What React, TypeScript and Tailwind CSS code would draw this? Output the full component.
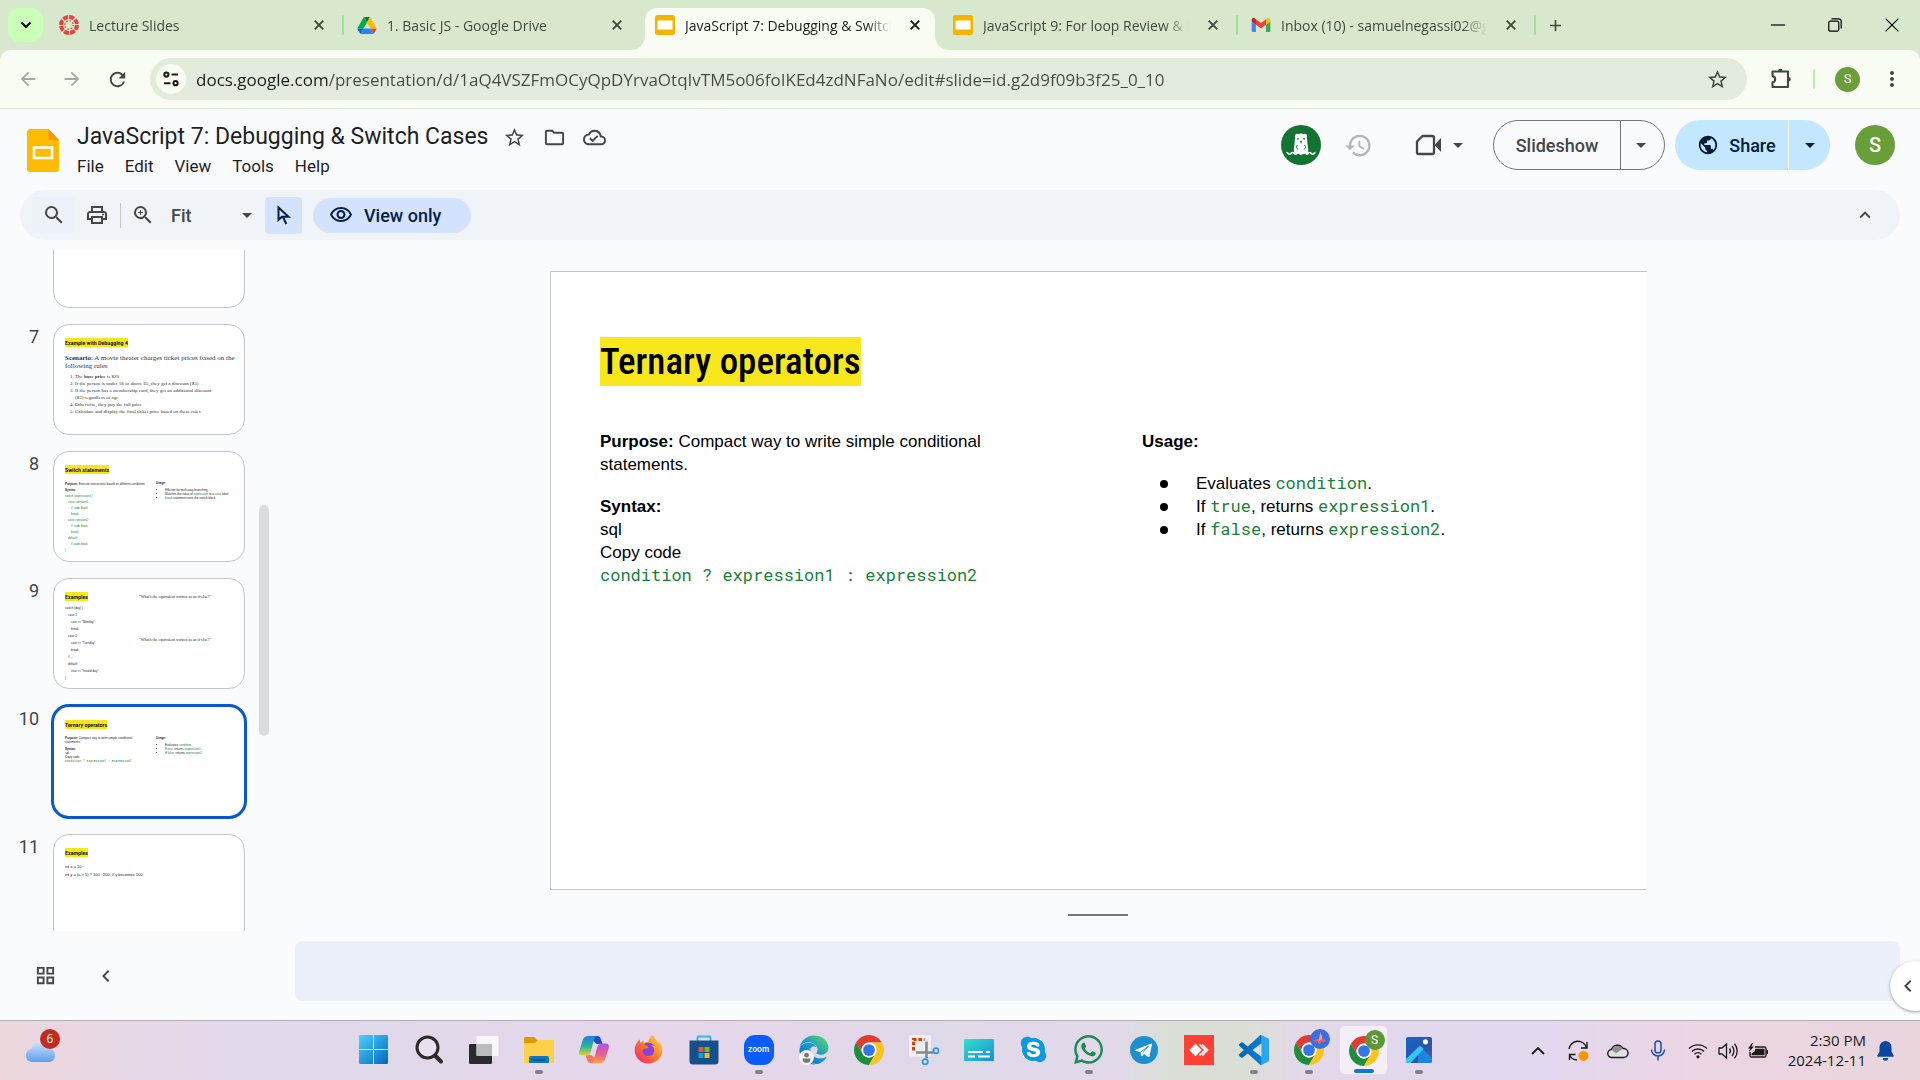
import React from "react";
import {
  MdAdd,
  MdArrowBack,
  MdArrowDropDown,
  MdArrowForward,
  MdChevronLeft,
  MdGridView,
  MdHistory,
  MdKeyboardArrowUp,
  MdMoreVert,
  MdOutlineCloudDone,
  MdOutlineFolder,
  MdOutlinePrint,
  MdOutlineVisibility,
  MdPublic,
  MdRefresh,
  MdSearch,
  MdStarOutline,
  MdZoomIn,
} from "react-icons/md";
import { FaEdge, FaFirefoxBrowser, FaSkype, FaWhatsapp } from "react-icons/fa";

/* ---------- brand marks ---------- */

function CanvasMark() {
  return (
    <svg viewBox="0 0 20 20" className="size-5" aria-hidden="true">
      <circle cx="10" cy="10" r="8" fill="none" stroke="#e8433a" strokeWidth="4" strokeDasharray="5 1.28" />
      <circle cx="10" cy="10" r="4.2" fill="none" stroke="#e8433a" strokeWidth="1.4" strokeDasharray="1.4 1.9" />
    </svg>
  );
}

function DriveMark() {
  return (
    <svg viewBox="0 0 87.3 78" className="h-[17px] w-5" aria-hidden="true">
      <path fill="#0066da" d="m6.6 66.85 3.85 6.65c.8 1.4 1.95 2.5 3.3 3.3l13.75-23.8h-27.5c0 1.55.4 3.1 1.2 4.5z" />
      <path fill="#00ac47" d="m43.65 25-13.75-23.8c-1.35.8-2.5 1.9-3.3 3.3l-25.4 44a9.06 9.06 0 0 0 -1.2 4.5h27.5z" />
      <path fill="#ea4335" d="m73.55 76.8c1.35-.8 2.5-1.9 3.3-3.3l1.6-2.75 7.65-13.25c.8-1.4 1.2-2.95 1.2-4.5h-27.502l5.852 11.5z" />
      <path fill="#00832d" d="m43.65 25 13.75-23.8c-1.35-.8-2.9-1.2-4.5-1.2h-18.5c-1.6 0-3.15.45-4.5 1.2z" />
      <path fill="#2684fc" d="m59.8 53h-32.3l-13.75 23.8c1.35.8 2.9 1.2 4.5 1.2h50.8c1.6 0 3.15-.45 4.5-1.2z" />
      <path fill="#ffba00" d="m73.4 26.5-12.7-22c-.8-1.4-1.95-2.5-3.3-3.3l-13.75 23.8 16.15 28h27.45c0-1.55-.4-3.1-1.2-4.5z" />
    </svg>
  );
}

function SlidesMark() {
  return (
    <svg viewBox="0 0 20 20" className="size-5" aria-hidden="true">
      <rect width="20" height="20" rx="2.5" fill="#f5b400" />
      <rect x="2.5" y="5.5" width="15" height="9" fill="#fff" />
    </svg>
  );
}

function GmailMark() {
  return (
    <svg viewBox="52 42 88 66" className="h-[14px] w-5" aria-hidden="true">
      <path fill="#4285f4" d="M58 108h14V74L52 59v43c0 3.32 2.69 6 6 6" />
      <path fill="#34a853" d="M120 108h14c3.32 0 6-2.69 6-6V59l-20 15" />
      <path fill="#fbbc04" d="M120 48v26l20-15v-8c0-7.42-8.47-11.65-14.4-7.2" />
      <path fill="#ea4335" d="M72 74V48l24 18 24-18v26L96 92" />
      <path fill="#c5221f" d="M52 51v8l20 15V48l-5.6-4.2c-5.94-4.45-14.4-.22-14.4 7.2" />
    </svg>
  );
}

function ChromeMark() {
  return (
    <svg viewBox="0 0 48 48" className="size-[30px]" aria-hidden="true">
      <path fill="#e33b2e" d="M24 12H44.78A24 24 0 0 0 3.22 12L13.61 30A12 12 0 0 1 24 12Z" />
      <path fill="#1e8e3e" d="M13.61 30L3.22 12A24 24 0 0 0 24 48L34.39 30A12 12 0 0 1 13.61 30Z" />
      <path fill="#fcc419" d="M34.39 30L24 48A24 24 0 0 0 44.78 12H24A12 12 0 0 1 34.39 30Z" />
      <circle cx="24" cy="24" r="12" fill="#fff" />
      <circle cx="24" cy="24" r="9.4" fill="#3376e8" />
    </svg>
  );
}

/* ---------- browser chrome ---------- */

const tabs = [
  { title: "Lecture Slides", icon: <CanvasMark />, active: false, divider: true },
  { title: "1. Basic JS - Google Drive", icon: <DriveMark />, active: false, divider: false },
  { title: "JavaScript 7: Debugging & Switch Cases", icon: <SlidesMark />, active: true, divider: false },
  { title: "JavaScript 9: For loop Review & Functions", icon: <SlidesMark />, active: false, divider: true },
  { title: "Inbox (10) - samuelnegassi02@gmail.com", icon: <GmailMark />, active: false, divider: true },
];

function TabStrip() {
  return (
    <div className="flex h-[50px] shrink-0 items-stretch bg-[#d8e8cd] text-[#3f4a3a]">
      <button aria-label="Search tabs" className="mt-2 mr-1.5 ml-2 flex h-[34px] w-[35px] items-center justify-center rounded-xl bg-[#c9ffb8] text-black">
        <svg viewBox="0 0 12 8" className="h-2 w-3" aria-hidden="true">
          <path d="M1.5 1.5 6 6l4.5-4.5" fill="none" stroke="currentColor" strokeWidth="2" />
        </svg>
      </button>
      {tabs.map((t) => (
        <React.Fragment key={t.title}>
          <div className={t.active ? "relative mt-2 flex w-[290px] items-center rounded-t-xl bg-[#f8fcf2] pr-2.5 pb-2 pl-2.5 text-[#1b1c18]" : "mt-2 flex w-[290px] items-center pr-2.5 pb-2 pl-2.5"}>
            {t.active && (
              <>
                <svg viewBox="0 0 14 14" className="absolute bottom-0 -left-3.5 size-3.5" aria-hidden="true">
                  <path d="M14 0v14H0A14 14 0 0 0 14 0Z" fill="#f8fcf2" />
                </svg>
                <svg viewBox="0 0 14 14" className="absolute -right-3.5 bottom-0 size-3.5" aria-hidden="true">
                  <path d="M0 0v14h14A14 14 0 0 1 0 0Z" fill="#f8fcf2" />
                </svg>
              </>
            )}
            {t.icon}
            <span className="ml-2.5 w-[206px] overflow-hidden mask-[linear-gradient(90deg,#000_182px,transparent_206px)] text-[14px] whitespace-nowrap">
              {t.title}
            </span>
            <button aria-label={`Close ${t.title}`} className="ml-auto flex size-5 items-center justify-center">
              <svg viewBox="0 0 10 10" className="size-2.5" aria-hidden="true">
                <path d="M.7.7l8.6 8.6M9.3.7L.7 9.3" stroke="currentColor" strokeWidth="1.9" />
              </svg>
            </button>
          </div>
          <div className="mt-[15px] flex h-5 w-2 justify-center">{t.divider && <div className="h-5 w-0.5 rounded-full bg-[#a6dc95]" />}</div>
        </React.Fragment>
      ))}
      <button aria-label="New tab" className="ml-1 flex w-6 items-center justify-center">
        <MdAdd className="size-[19px]" />
      </button>
      <div className="ml-auto flex text-black">
        <button aria-label="Minimize" className="flex w-[57px] items-center justify-center">
          <svg viewBox="0 0 14 14" className="size-3.5" aria-hidden="true">
            <path d="M0 7h14" stroke="currentColor" strokeWidth="1.2" />
          </svg>
        </button>
        <button aria-label="Restore" className="flex w-[57px] items-center justify-center">
          <svg viewBox="0 0 14 14" className="size-3.5" fill="none" stroke="currentColor" strokeWidth="1.2" aria-hidden="true">
            <rect x=".8" y="3.2" width="10" height="10" rx="1.5" />
            <path d="M3.4.8h7.2a2.6 2.6 0 0 1 2.6 2.6v7.2" />
          </svg>
        </button>
        <button aria-label="Close window" className="flex w-[57px] items-center justify-center">
          <svg viewBox="0 0 14 14" className="size-3.5" aria-hidden="true">
            <path d="M.6.6l12.8 12.8M13.4.6L.6 13.4" stroke="currentColor" strokeWidth="1.2" />
          </svg>
        </button>
      </div>
    </div>
  );
}

function AddressRow() {
  return (
    <div className="shrink-0 bg-[#d8e8cd]">
      <div className="flex h-[59px] items-center rounded-t-[10px] border-b border-[#dde3d4] bg-[#f8fcf2] pl-1.5 text-[#3f4a3a]">
        <button aria-label="Back" className="flex w-11 justify-center text-[#a3aa9d]">
          <MdArrowBack className="size-[22px]" />
        </button>
        <button aria-label="Forward" className="flex w-11 justify-center text-[#a3aa9d]">
          <MdArrowForward className="size-[22px]" />
        </button>
        <button aria-label="Reload" className="mr-2.5 flex w-[46px] justify-center">
          <MdRefresh className="size-[23px]" />
        </button>
        <div className="flex h-[42px] flex-1 items-center rounded-full bg-[#e3ebdc] pr-[18px] pl-1.5">
          <button aria-label="View site information" className="flex size-[30px] items-center justify-center rounded-full bg-[#f8fcf2] text-[#1b1c18]">
            <svg viewBox="0 0 16 16" className="size-4" fill="none" stroke="currentColor" strokeWidth="2" aria-hidden="true">
              <circle cx="3.4" cy="3.6" r="2.1" />
              <path d="M8.5 3.6H15M1 12.2h6.5" />
              <circle cx="12.6" cy="12.2" r="2.1" />
            </svg>
          </button>
          <input
            aria-label="Address"
            readOnly
            value="docs.google.com/presentation/d/1aQ4VSZFmOCyQpDYrvaOtqIvTM5o06foIKEd4zdNFaNo/edit#slide=id.g2d9f09b3f25_0_10"
            className="ml-2.5 h-8 flex-1 bg-[linear-gradient(90deg,#1b1c18_131px,#454b42_131px)] bg-clip-text text-[17px] text-transparent outline-none"
          />
          <button aria-label="Bookmark this tab">
            <MdStarOutline className="size-[23px]" />
          </button>
        </div>
        <button aria-label="Extensions" className="ml-[23px]">
          <svg viewBox="0 0 22 22" className="size-[22px]" fill="none" stroke="currentColor" strokeWidth="2.1" strokeLinejoin="round" aria-hidden="true">
            <path d="M2.5 3.5h15.5v15.500h-15.500v-4.600a3.200 3.200 0 0 0 0-6.300z" />
            <path fill="currentColor" stroke="none" d="M8 3a2.300 2.300 0 0 1 4.600 0zM18.500 9a2.300 2.300 0 0 1 0 4.600z" />
          </svg>
        </button>
        <div className="ml-[21px] h-5 w-0.5 rounded-full bg-[#b9eda9]" />
        <button aria-label="Profile" className="ml-5 flex size-[25px] items-center justify-center rounded-full bg-[#689f38] font-[Roboto] text-[13px] text-white">
          S
        </button>
        <button aria-label="Browser menu" className="mr-4 ml-5">
          <MdMoreVert className="size-6" />
        </button>
      </div>
    </div>
  );
}

/* ---------- editor header ---------- */

function OtterBadge() {
  return (
    <svg viewBox="0 0 40 40" className="size-10" role="img" aria-label="Anonymous viewer">
      <circle cx="20" cy="20" r="20" fill="#137333" />
      <path fill="#fff" d="M14.500 9.500c1-.9 2.200-.7 2.800-.4 1.500-.9 4-.9 5.400 0 .6-.3 1.800-.5 2.800.4 1 1 .7 2.200.2 3 .8 3 .4 5 1 8 .4 2.300.6 4.400.4 6.200l-.8 2.300H13.700l-.8-2.300c-.2-1.800 0-3.900.4-6.200.6-3 .2-5 1-8-.5-.8-.8-2 .2-3z" />
      <path d="M5.500 27.500c1.500 0 1.500 1.700 3 1.700s1.500-1.700 3-1.700 1.500 1.700 3 1.700 1.500-1.700 2.800-1.700 1.500 1.700 2.700 1.700 1.500-1.700 2.800-1.700 1.500 1.700 2.900 1.700 1.500-1.700 3-1.700 1.500 1.700 3 1.700 1.500-1.700 2.800-1.700" fill="none" stroke="#fff" strokeWidth="1.600" />
      <g fill="#137333">
        <circle cx="17" cy="13.800" r=".9" />
        <circle cx="23" cy="13.800" r=".9" />
        <path d="M18.700 15.800h2.600l-.8 1.300v1.500h-1v-1.500z" />
      </g>
      <path d="M16.500 20c-1.500 1.200-1.400 3.800.7 4.300M23.500 20c1.500 1.200 1.400 3.800-.7 4.300" fill="none" stroke="#137333" strokeWidth="1" />
    </svg>
  );
}

function EditorHeader() {
  return (
    <header className="flex h-[81px] shrink-0 items-start justify-between pr-[25px] pl-[27px]">
      <div className="flex">
        <a href="#home" aria-label="Slides home" className="mt-5">
          <svg viewBox="0 0 32 43" className="h-[43px] w-8" aria-hidden="true">
            <path fill="#fb0" d="M3 0h18.500L32 11v29a3 3 0 0 1-3 3H3a3 3 0 0 1-3-3V3a3 3 0 0 1 3-3z" />
            <path fill="#ff9500" d="M21.500 0 32 11H21.500z" />
            <rect x="7" y="18.500" width="18" height="10.500" fill="none" stroke="#fff" strokeWidth="2.600" />
          </svg>
        </a>
        <div className="ml-[18px] pt-3.5">
          <div className="flex h-7 items-center text-[#444746]">
            <h1 className="mr-[15px] font-[Roboto] text-[23px] leading-7 text-[#1f1f1f]">JavaScript 7: Debugging &amp; Switch Cases</h1>
            <button aria-label="Star" className="mr-[17px]">
              <MdStarOutline className="size-[23px]" />
            </button>
            <button aria-label="Move" className="mr-[17px]">
              <MdOutlineFolder className="size-[23px]" />
            </button>
            <button aria-label="See document status">
              <MdOutlineCloudDone className="size-[23px]" />
            </button>
          </div>
          <nav className="flex h-8 items-center gap-[21px] font-[Roboto] text-[17px] text-[#1f1f1f]">
            <button>File</button>
            <button>Edit</button>
            <button>View</button>
            <button>Tools</button>
            <button>Help</button>
          </nav>
        </div>
      </div>
      <div className="mt-[11px] flex items-center text-[#444746]">
        <OtterBadge />
        <button aria-label="Last edit" className="ml-[23px] text-[#b4b6b8]">
          <MdHistory className="size-[29px]" />
        </button>
        <button aria-label="Join a call" className="ml-[42px] flex items-center">
          <svg viewBox="0 0 27 22" className="h-[22px] w-[27px]" aria-hidden="true">
            <path d="M7.500 2h9.700a1.800 1.800 0 0 1 1.800 1.800v14.400a1.800 1.800 0 0 1-1.800 1.800H3.800A1.800 1.800 0 0 1 2 18.200V7.500z" fill="none" stroke="currentColor" strokeWidth="2.300" strokeLinejoin="round" />
            <path d="M19.500 11 26 4v14z" fill="currentColor" />
          </svg>
          <MdArrowDropDown className="ml-1 size-6" />
        </button>
        <div className="ml-[23px] flex h-[50px] w-[172px] rounded-full border border-[#747775] font-[Roboto] text-[18px] font-medium">
          <button className="flex-1 border-r border-[#747775]">Slideshow</button>
          <button aria-label="Slideshow options" className="flex w-[43px] items-center justify-center pr-1">
            <MdArrowDropDown className="size-6" />
          </button>
        </div>
        <div className="ml-2.5 flex h-[50px] w-[155px] overflow-hidden rounded-full bg-[#c2e7ff] font-[Roboto] text-[18px] font-medium text-[#001d35]">
          <button className="flex flex-1 items-center justify-center gap-2.5 border-r border-white pl-2.5">
            <MdPublic className="size-[22px]" />
            Share
          </button>
          <button aria-label="Share options" className="flex w-[41px] items-center justify-center">
            <MdArrowDropDown className="size-6" />
          </button>
        </div>
        <button aria-label="Account" className="ml-[25px] flex size-10 items-center justify-center rounded-full bg-[#689f38] font-[Roboto] text-[20px] font-medium text-white">
          S
        </button>
      </div>
    </header>
  );
}

function Toolbar() {
  return (
    <div className="mx-5 flex h-[50px] shrink-0 items-center rounded-full bg-[#f0f4f9] pr-6 pl-3 text-[#444746]">
      <button aria-label="Search the menus" className="flex h-9 w-[43px] items-center justify-center bg-[#edf2fa]">
        <MdSearch className="size-6" />
      </button>
      <button aria-label="Print" className="flex w-[43px] items-center justify-center">
        <MdOutlinePrint className="size-6" />
      </button>
      <div className="mx-0.5 h-[25px] w-px bg-[#c7c7c7]" />
      <button aria-label="Zoom" className="flex w-10 items-center justify-center">
        <MdZoomIn className="size-6" />
      </button>
      <div className="ml-2 flex w-[88px] items-center font-[Roboto]">
        <select aria-label="Zoom level" className="w-16 appearance-none text-[18px] font-medium">
          <option>Fit</option>
        </select>
        <MdArrowDropDown className="size-6 shrink-0" />
      </div>
      <button aria-label="Select" className="ml-1.5 flex h-[37px] w-[37px] items-center justify-center rounded bg-[#d3e3fd] text-[#041e49]">
        <svg viewBox="0 0 16 20" className="h-5 w-4" fill="none" stroke="currentColor" strokeWidth="2" aria-hidden="true">
          <path d="M2.500 2.500v12.500l3.400-3.300h6.600z" />
          <path d="M7 12l3.300 7" />
        </svg>
      </button>
      <button className="ml-[11px] flex h-[35px] w-[158px] items-center gap-[11px] rounded-full bg-[#d3e3fd] pl-4 font-[Roboto] text-[18px] font-medium text-[#041e49]">
        <MdOutlineVisibility className="size-6" />
        View only
      </button>
      <button aria-label="Hide the menus" className="ml-auto">
        <MdKeyboardArrowUp className="size-[22px]" />
      </button>
    </div>
  );
}

/* ---------- filmstrip ---------- */

function MiniTitle({ children }: { children: React.ReactNode }) {
  return (
    <div className="flex h-[9px]">
      <span className="bg-[#f7e61e] font-['Roboto_Condensed',sans-serif] text-[6px] leading-[9px] font-medium whitespace-nowrap text-black">{children}</span>
    </div>
  );
}

function MiniLines({ lines }: { lines: [number, string][] }) {
  return (
    <>
      {lines.map(([level, text], i) => (
        <div key={i} className={level === 0 ? "" : level === 1 ? "pl-[3px]" : "pl-1.5"}>
          {text}
        </div>
      ))}
    </>
  );
}

const slide7 = (
  <>
    <MiniTitle>Example with Debugging 4</MiniTitle>
    <div className="mt-[7px] font-['Liberation_Serif',serif] text-[#333]">
      <p className="text-[7px] leading-2">
        <b>Scenario</b>: A movie theater charges ticket prices based on the following rules
      </p>
      <ol className="mt-[3px] w-[152px] list-decimal pl-2.5 text-[5px] leading-[7px]">
        <li>
          The <b>base price</b> is $20
        </li>
        <li>If the person is under 18 or above 65, they get a discount ($5)</li>
        <li>
          If the person has a membership card, they get an additional discount
          <br />
          ($3) regardless of age
        </li>
        <li>Otherwise, they pay the full price</li>
        <li>Calculate and display the final ticket price based on these rules</li>
      </ol>
    </div>
  </>
);

const slide8 = (
  <>
    <MiniTitle>Switch statements</MiniTitle>
    <div className="mt-[7px] flex text-[3px]">
      <div className="w-[91px] shrink-0 leading-1.5">
        <p>
          <b>Purpose:</b> Execute instructions based on different conditions.
        </p>
        <p className="font-bold">Syntax:</p>
        <div className="text-[#188038]">
          <MiniLines
            lines={[
              [0, "switch (expression) {"],
              [1, "case constant1:"],
              [2, "// code block"],
              [2, "break;"],
              [1, "case constant2:"],
              [2, "// code block"],
              [2, "break;"],
              [1, "default:"],
              [2, "// code block"],
              [0, "}"],
            ]}
          />
        </div>
      </div>
      <div className="leading-1 whitespace-nowrap">
        <p className="font-bold">Usage:</p>
        <ul className="mt-[3px] list-disc pl-[9px]">
          <li>Efficient for multi-way branching.</li>
          <li>
            Matches the value of <span className="text-[#188038]">expression</span> to a <span className="text-[#188038]">case</span> label.
          </li>
          <li>
            <span className="text-[#188038]">break</span> statement exits the switch block.
          </li>
        </ul>
      </div>
    </div>
  </>
);

const slide9 = (
  <div className="flex">
    <div className="w-[74px] shrink-0">
      <MiniTitle>Examples</MiniTitle>
      <div className="mt-1 text-[3px] leading-[7px]">
        <MiniLines
          lines={[
            [0, "switch (day) {"],
            [1, "case 1:"],
            [2, 'cout << "Monday";'],
            [2, "break;"],
            [1, "case 2:"],
            [2, 'cout << "Tuesday";'],
            [2, "break;"],
            [1, "// ..."],
            [1, "default:"],
            [2, 'cout << "Invalid day";'],
            [0, "}"],
          ]}
        />
      </div>
    </div>
    <div className="flex flex-col gap-[38px] pt-0.5 font-['Liberation_Serif',serif] text-[4px] leading-[5px] whitespace-nowrap">
      <p>"What's the equivalent written as an if-else?"</p>
      <p>"What's the equivalent written as an if-else?"</p>
    </div>
  </div>
);

const slide10 = (
  <>
    <MiniTitle>Ternary operators</MiniTitle>
    <div className="mt-[7px] flex text-[3px] leading-1">
      <div className="w-[91px] shrink-0">
        <p className="w-[76px]">
          <b>Purpose:</b> Compact way to write simple conditional
          <br />
          statements.
        </p>
        <p className="mt-[3px] font-bold">Syntax:</p>
        <p>sql</p>
        <p>Copy code</p>
        <p className="font-['Roboto_Mono','Liberation_Mono',monospace] text-[#188038]">condition ? expression1 : expression2</p>
      </div>
      <div className="whitespace-nowrap">
        <p className="font-bold">Usage:</p>
        <ul className="mt-[3px] list-disc pl-[9px]">
          <li>
            Evaluates <span className="text-[#188038]">condition</span>.
          </li>
          <li>
            If <span className="text-[#188038]">true</span>, returns <span className="text-[#188038]">expression1</span>.
          </li>
          <li>
            If <span className="text-[#188038]">false</span>, returns <span className="text-[#188038]">expression2</span>.
          </li>
        </ul>
      </div>
    </div>
  </>
);

const slide11 = (
  <>
    <MiniTitle>Examples</MiniTitle>
    <div className="mt-1.5 text-[4px] leading-2">
      <p>int a = 10;</p>
      <p>int y = (a &gt; 5) ? 100 : 200; // y becomes 100</p>
    </div>
  </>
);

const slides = [
  { n: 6, body: null },
  { n: 7, body: slide7 },
  { n: 8, body: slide8 },
  { n: 9, body: slide9 },
  { n: 10, body: slide10 },
  { n: 11, body: slide11 },
];

function Filmstrip() {
  return (
    <aside className="flex w-[295px] shrink-0 flex-col">
      <div className="mt-2.5 flex flex-1 basis-0 overflow-hidden">
        <ol className="-mt-[53px] flex w-[245px] shrink-0 flex-col gap-4">
          {slides.map((s) => (
            <li key={s.n} className={s.n === 10 ? "flex shrink-0 py-px" : "flex shrink-0"}>
              <span className="w-[39px] pt-px text-right font-[Roboto] text-[18px] leading-6 text-[#444746]">{s.n}</span>
              <button
                aria-label={`Slide ${s.n}`}
                className={
                  s.n === 10
                    ? "ml-3.5 flex h-[111px] w-48 flex-col justify-start rounded-2xl bg-white pt-3.5 pr-1 pl-3 text-left outline-3 -outline-offset-1 outline-[#0b57d0]"
                    : "ml-3.5 flex h-[111px] w-48 flex-col justify-start rounded-2xl border border-[#c4c7c5] bg-white pt-[13px] pr-1 pl-[11px] text-left"
                }
              >
                <div className="w-full font-['Liberation_Sans',sans-serif] text-[#222]">{s.body}</div>
              </button>
            </li>
          ))}
        </ol>
        <div className="mt-[255px] ml-3.5 h-[231px] w-2.5 rounded-full bg-[#dadce0]" />
      </div>
      <div className="flex h-[89px] items-center gap-[37px] pl-[34px] text-[#444746]">
        <button aria-label="Grid view">
          <MdGridView className="size-[23px]" />
        </button>
        <button aria-label="Hide filmstrip">
          <MdChevronLeft className="size-6" />
        </button>
      </div>
    </aside>
  );
}

/* ---------- slide canvas ---------- */

function Code({ children }: { children: React.ReactNode }) {
  return <code className="font-['Roboto_Mono','Liberation_Mono',monospace] text-[17px] leading-4 text-[#188038]">{children}</code>;
}

function Canvas() {
  return (
    <main className="flex flex-1 flex-col pr-5">
      <div className="flex flex-1 flex-col items-center pt-[31px] pl-0.5">
        <section className="h-[619px] w-[1097px] max-w-full border-y border-l border-[#c4c7c5] bg-white pt-[65px] pl-[49px] font-['Liberation_Sans',sans-serif] text-[17px] leading-[23px] text-black">
          <h2 className="flex">
            <span className="h-[49px] bg-[#f9e71e] font-['Roboto_Condensed',sans-serif] text-[37px] leading-[49px] font-medium whitespace-nowrap">Ternary operators</span>
          </h2>
          <div className="mt-11 flex">
            <div className="w-[542px]">
              <p className="w-[400px]">
                <b>Purpose:</b> Compact way to write simple conditional statements.
              </p>
              <p className="mt-[19px] font-bold">Syntax:</p>
              <p>sql</p>
              <p>Copy code</p>
              <p>
                <Code>condition ? expression1 : expression2</Code>
              </p>
            </div>
            <div>
              <p className="font-bold">Usage:</p>
              <ul className="mt-[19px]">
                {[
                  <>Evaluates <Code>condition</Code>.</>,
                  <>If <Code>true</Code>, returns <Code>expression1</Code>.</>,
                  <>If <Code>false</Code>, returns <Code>expression2</Code>.</>,
                ].map((item, i) => (
                  <li key={i} className="flex h-[23px] items-center">
                    <span className="mr-7 ml-[18px] size-2 rounded-full bg-black" />
                    <span>{item}</span>
                  </li>
                ))}
              </ul>
            </div>
          </div>
        </section>
        <div className="mt-6 mr-0.5 h-0.5 w-[60px] bg-[#747775]" />
      </div>
      <textarea aria-label="Speaker notes" className="mb-[19px] block h-[60px] w-full shrink-0 resize-none rounded-lg bg-[#ebf0fa] outline-none" />
    </main>
  );
}

/* ---------- taskbar ---------- */

const taskbarApps: { name: string; run?: boolean; active?: boolean; icon: React.ReactNode }[] = [
  {
    name: "Start",
    icon: (
      <svg viewBox="0 0 29 29" className="size-[29px]">
        <defs>
          <linearGradient id="win" x1="0" y1="0" x2="29" y2="29" gradientUnits="userSpaceOnUse">
            <stop stopColor="#4fd0ff" />
            <stop offset="1" stopColor="#0067c0" />
          </linearGradient>
        </defs>
        <path fill="url(#win)" d="M1 0h13v14H0V1a1 1 0 0 1 1-1zM15 0h13a1 1 0 0 1 1 1v13H15zM0 15h14v14H1a1 1 0 0 1-1-1zM15 15h14v13a1 1 0 0 1-1 1H15z" />
      </svg>
    ),
  },
  {
    name: "Search",
    icon: (
      <svg viewBox="0 0 30 30" className="size-[30px]" fill="none" stroke="#2b2b2b">
        <circle cx="13.500" cy="12.500" r="10.500" strokeWidth="3" fill="#e9e2ee" />
        <path d="M21 20.500l6 6" strokeWidth="4" strokeLinecap="round" />
      </svg>
    ),
  },
  {
    name: "Task view",
    icon: (
      <svg viewBox="0 0 30 30" className="size-[30px]">
        <rect x="0" y="9" width="23" height="20" rx="1" fill="#2b2b2b" />
        <rect x="7.500" y="1" width="22" height="20" rx="1" fill="#f7f6f8" />
        <path d="M7.500 9H23v12H7.500z" fill="#bdbcbd" />
      </svg>
    ),
  },
  {
    name: "File Explorer",
    run: true,
    icon: (
      <svg viewBox="0 0 30 30" className="size-[30px]">
        <path fill="#dc9a05" d="M1 2h9l3 3h16v6H0V3a1 1 0 0 1 1-1z" />
        <path fill="#ffd04a" d="M0 8h11l3-3h15a1 1 0 0 1 1 1v22H0z" />
        <path fill="#0f75bd" d="M5 28v-5a2 2 0 0 1 2-2h16a2 2 0 0 1 2 2v5z" />
        <path d="M8.500 25h13" stroke="#0a4b80" strokeWidth="1.300" />
      </svg>
    ),
  },
  {
    name: "Copilot",
    icon: (
      <svg viewBox="0 0 30 30" className="size-[30px]">
        <defs>
          <linearGradient id="cpa" x1="0" y1="0" x2="0" y2="1">
            <stop stopColor="#1d7fe0" />
            <stop offset=".55" stopColor="#2fb59a" />
            <stop offset="1" stopColor="#e8d22c" />
          </linearGradient>
          <linearGradient id="cpb" x1="0" y1="0" x2="0" y2="1">
            <stop stopColor="#a855f0" />
            <stop offset=".5" stopColor="#e85a92" />
            <stop offset="1" stopColor="#fba044" />
          </linearGradient>
        </defs>
        <path fill="#1b4fc4" d="M9 1h9.500c2 0 2.700 1.200 3.300 3l1.700 5h-6z" />
        <path fill="#f27a5a" d="M21 28h-9.500c-2 0-2.700-1.200-3.300-3l-1.700-5h6z" />
        <path fill="url(#cpa)" d="M9.500 1H18c-2 .8-2.600 2.500-3.200 4.500L12 16c-.8 3-2 4.500-5 4.500H3c-2.600 0-3.400-2-2.700-4.500L3.600 5.500C4.500 2.500 6.500 1 9.500 1z" />
        <path fill="url(#cpb)" d="M20.500 28H12c2-.8 2.600-2.500 3.200-4.500L18 13c.8-3 2-4.500 5-4.500h4c2.600 0 3.400 2 2.700 4.500l-3.300 10.500c-.9 3-2.900 4.500-5.900 4.500z" />
      </svg>
    ),
  },
  {
    name: "Firefox",
    icon: (
      <div className="grid place-items-center">
        <svg viewBox="0 0 30 30" className="col-start-1 row-start-1 size-[30px]">
          <defs>
            <linearGradient id="ff" x1="1" y1="0" x2="0" y2="1">
              <stop stopColor="#ffe23f" />
              <stop offset=".5" stopColor="#ff7a2a" />
              <stop offset="1" stopColor="#f0177b" />
            </linearGradient>
          </defs>
          <circle cx="15" cy="16" r="9" fill="#8446d8" />
        </svg>
        <FaFirefoxBrowser className="col-start-1 row-start-1 size-[29px] fill-[url(#ff)]" />
      </div>
    ),
  },
  {
    name: "Microsoft Store",
    icon: (
      <svg viewBox="0 0 30 30" className="size-[30px]">
        <path d="M8.500 6V3a1.500 1.500 0 0 1 1.500-1.500h10A1.500 1.500 0 0 1 21.500 3v3" fill="none" stroke="#2cb9f2" strokeWidth="2" />
        <path fill="#15508c" d="M.5 5.500h29V26a3.500 3.500 0 0 1-3.500 3.500H4A3.500 3.500 0 0 1 .5 26z" />
        <path fill="#f25022" d="M9.500 12h5v5h-5z" />
        <path fill="#7fba00" d="M15.500 12h5v5h-5z" />
        <path fill="#00a4ef" d="M9.500 18h5v5h-5z" />
        <path fill="#ffb900" d="M15.500 18h5v5h-5z" />
      </svg>
    ),
  },
  {
    name: "Zoom",
    run: true,
    icon: <span className="flex size-[30px] items-center justify-center rounded-[11px] bg-[#0b5cff] pb-0.5 font-[Inter] text-[8px] font-semibold text-white">zoom</span>,
  },
  {
    name: "Edge",
    icon: (
      <div className="relative size-[30px]">
        <svg viewBox="0 0 1 1" className="absolute size-0">
          <defs>
            <linearGradient id="edge" x1="0" y1="1" x2="1" y2="0">
              <stop stopColor="#0c59a4" />
              <stop offset=".45" stopColor="#1393d8" />
              <stop offset="1" stopColor="#5de05a" />
            </linearGradient>
          </defs>
        </svg>
        <FaEdge className="size-[30px] fill-[url(#edge)]" />
        <svg viewBox="0 0 16 16" className="absolute bottom-0 left-0 size-[15px]">
          <circle cx="8" cy="8" r="8" fill="#f4f4f4" />
          <circle cx="8" cy="5.500" r="2.500" fill="#777" />
          <path fill="#777" d="M4 9h8v1.500a3 3 0 0 1-3 3H7a3 3 0 0 1-3-3z" />
        </svg>
      </div>
    ),
  },
  { name: "Chrome", icon: <ChromeMark /> },
  {
    name: "Snipping Tool",
    icon: (
      <svg viewBox="0 0 30 30" className="size-[30px]">
        <rect x="0" y="0" width="22" height="21.500" rx="2" fill="#f0eff0" />
        <path d="M4.500 15.500v-11H15.500" fill="none" stroke="#d8400d" strokeWidth="3" strokeDasharray="3.500 1.800" />
        <path d="M17.500 6.500v17M7 17.500h17" stroke="#7f8a94" strokeWidth="2.600" />
        <circle cx="16.200" cy="26.800" r="2.600" fill="none" stroke="#2a9be0" strokeWidth="1.800" />
        <circle cx="27" cy="15.800" r="2.600" fill="none" stroke="#2a9be0" strokeWidth="1.800" />
      </svg>
    ),
  },
  {
    name: "Captions",
    icon: (
      <svg viewBox="0 0 30 22" className="h-[22px] w-[30px]">
        <defs>
          <linearGradient id="cap" x1="0" y1="0" x2="1" y2="1">
            <stop stopColor="#33e0c8" />
            <stop offset="1" stopColor="#1590dc" />
          </linearGradient>
        </defs>
        <rect width="30" height="22" rx="1" fill="url(#cap)" />
        <path d="M4 13h15M22 13h4M4 17.500h7M14 17.500h12" stroke="#fff" strokeWidth="2" />
      </svg>
    ),
  },
  {
    name: "Skype",
    icon: (
      <div className="flex size-[29px] items-center justify-center rounded-full bg-[radial-gradient(#fff_60%,transparent_61%)]">
        <FaSkype className="size-[29px] text-[#0a9ae4]" />
      </div>
    ),
  },
  { name: "WhatsApp", run: true, icon: <FaWhatsapp className="size-[33px] text-[#1b8a54]" /> },
  {
    name: "Telegram",
    icon: (
      <svg viewBox="0 0 28 28" className="size-7">
        <circle cx="14" cy="14" r="14" fill="#1d8fcf" />
        <path fill="#fff" d="M5.500 13.800 20.800 7.700c.8-.3 1.300.2 1.100 1.200l-2.400 11.300c-.2.900-.8 1.100-1.500.7l-3.800-2.800-1.900 1.900c-.5.500-1 .3-1.100-.4l-.7-3.700-5-1.200c-.7-.3-.6-.6 0-.9z" />
        <path d="M10.800 15.900l7.700-5.700-5.800 6.600" fill="none" stroke="#1d8fcf" strokeWidth=".9" />
      </svg>
    ),
  },
  {
    name: "AnyDesk",
    icon: (
      <svg viewBox="0 0 30 30" className="size-[30px]">
        <path fill="#ff4034" d="M0 0h30v30H0z" />
        <path fill="#fff" d="M11.500 8.800 17.700 15l-6.200 6.200L5.300 15z" />
        <path d="M15.500 9.500 21 15l-5.500 5.500M18.300 9.500 23.500 15l-5.200 5.500" fill="none" stroke="#fff" strokeWidth="1.700" />
      </svg>
    ),
  },
  {
    name: "Visual Studio Code",
    run: true,
    icon: (
      <svg viewBox="0 0 24 24" className="size-[30px]">
        <defs>
          <linearGradient id="vsc">
            <stop stopColor="#0066b0" />
            <stop offset=".72" stopColor="#0a7ccc" />
            <stop offset=".76" stopColor="#2aa5f0" />
          </linearGradient>
        </defs>
        <path fill="url(#vsc)" d="M23.150 2.587L18.210.21a1.494 1.494 0 0 0-1.705.29l-9.460 8.630-4.120-3.128a.999.999 0 0 0-1.276.057L.327 7.261A1 1 0 0 0 .326 8.740L3.899 12 .326 15.260a1 1 0 0 0 .001 1.479L1.650 17.940a.999.999 0 0 0 1.276.057l4.120-3.128 9.460 8.630a1.492 1.492 0 0 0 1.704.290l4.942-2.377A1.500 1.500 0 0 0 24 20.060V3.939a1.500 1.500 0 0 0-.850-1.352zm-5.146 14.861L10.826 12l7.178-5.448v10.896z" />
      </svg>
    ),
  },
  {
    name: "Chrome, personal",
    run: true,
    icon: (
      <div className="relative">
        <ChromeMark />
        <svg viewBox="0 0 20 20" className="absolute -top-1.5 -right-1.5 size-5">
          <circle cx="10" cy="10" r="10" fill="#3a6fe4" />
          <path fill="#f0605e" d="M10.500 3l1.800 6.500 4.200 2.700-4.800.6-3 2.700-.6-2.700-5-1.200 5.600-1.900z" />
          <path fill="#ff9d98" d="M10.500 3l1.800 6.500-3.600 3.300z" />
        </svg>
      </div>
    ),
  },
  {
    name: "Chrome, Samuel",
    run: true,
    active: true,
    icon: (
      <div className="relative">
        <ChromeMark />
        <span className="absolute -top-1.5 -right-1.5 flex size-5 items-center justify-center rounded-full bg-[#5f9636] font-[Roboto] text-[12px] text-white">S</span>
      </div>
    ),
  },
  {
    name: "Photos",
    run: true,
    icon: (
      <svg viewBox="0 0 26 26" className="size-[26px]">
        <defs>
          <linearGradient id="ph" x1="0" y1="0" x2="1" y2="1">
            <stop stopColor="#1266c4" />
            <stop offset=".6" stopColor="#2b54a8" />
            <stop offset="1" stopColor="#7a4aa0" />
          </linearGradient>
        </defs>
        <rect width="26" height="26" rx="2" fill="url(#ph)" />
        <path fill="#1c86dd" d="M12 18l4-7 10 10v3a2 2 0 0 1-2 2H12z" />
        <path fill="#34c6f5" d="M0 22 12.500 10c1-.9 2.200-.9 3.200 0l2 2L4.500 26H2a2 2 0 0 1-2-2z" />
        <circle cx="19.500" cy="4.800" r="2.600" fill="#fff" />
      </svg>
    ),
  },
];

function Tray() {
  return (
    <div className="ml-auto flex items-center pr-[26px] text-[#1b1b1b]">
      <button aria-label="Show hidden icons" className="flex w-10 justify-center">
        <svg viewBox="0 0 14 9" className="h-[9px] w-3.5" fill="none" stroke="currentColor" strokeWidth="1.800">
          <path d="M1 8l6-6 6 6" />
        </svg>
      </button>
      <button aria-label="Updates" className="flex w-10 justify-center">
        <svg viewBox="0 0 22 22" className="size-[22px]" fill="none" stroke="currentColor" strokeWidth="1.400">
          <path d="M2 9A9 9 0 0 1 19.500 7.500M20 2v6h-6M2.500 20v-5.500h6M2.800 15.500A9 9 0 0 0 10 20" />
          <circle cx="16.500" cy="16" r="5" fill="#ff9500" stroke="none" />
        </svg>
      </button>
      <button aria-label="OneDrive" className="flex w-10 justify-center">
        <svg viewBox="0 0 22 16" className="h-4 w-[22px]">
          <path d="M5 14.500a4 4 0 0 1-.5-8A6.300 6.300 0 0 1 16 5.500a4.500 4.500 0 0 1 1 9z" fill="#e3e3e3" stroke="#1b1b1b" strokeWidth="1.400" />
          <path d="M5 7a6 6 0 0 1 10.800-1.200L9 10.500z" fill="#8f8f8f" />
        </svg>
      </button>
      <button aria-label="Microphone in use" className="flex w-10 justify-center">
        <svg viewBox="0 0 16 21" className="h-[21px] w-4" fill="none" stroke="#1350a8" strokeWidth="1.500">
          <rect x="5" y="1" width="6" height="12" rx="3" />
          <path d="M1.500 9.500a6.500 6.500 0 0 0 13 0M8 16v4.500" />
        </svg>
      </button>
      <button aria-label="Network, volume and battery" className="ml-2.5 flex items-center gap-2.5">
        <svg viewBox="0 0 20 16" className="h-4 w-5" fill="none" stroke="currentColor" strokeWidth="1.400">
          <path d="M1 5.500a13 13 0 0 1 18 0M3.800 8.500a9 9 0 0 1 12.400 0M6.500 11.200a5 5 0 0 1 7 0" />
          <circle cx="10" cy="13.800" r="1.600" fill="currentColor" stroke="none" />
        </svg>
        <svg viewBox="0 0 20 18" className="h-[18px] w-5" fill="none" stroke="currentColor" strokeWidth="1.300">
          <path d="M1 6h3l4.500-4v14L4 12H1zM11.500 6.500a4 4 0 0 1 0 5M14 4a7.500 7.500 0 0 1 0 10M16.500 1.800a11 11 0 0 1 0 14.400" />
        </svg>
        <svg viewBox="0 0 20 16" className="h-4 w-5">
          <path d="M7 4h9.500A1.500 1.500 0 0 1 18 5.500v7a1.500 1.500 0 0 1-1.500 1.500h-13A1.500 1.500 0 0 1 2 12.500V9" fill="none" stroke="currentColor" strokeWidth="1.400" />
          <path d="M7.500 5.800H16.500v6.500H3.500V10.500l3-2zM18.500 7H20v4h-1.500zM4 0 0 5.500h2L1 9l5-5.500H3.500L5 0z" fill="currentColor" />
        </svg>
      </button>
      <button aria-label="Clock" className="ml-4 w-[82px] pb-0.5 text-right font-['Open_Sans',sans-serif] text-[15px] leading-5 whitespace-nowrap">
        <div>2:30 PM</div>
        <div>2024-12-11</div>
      </button>
      <button aria-label="Notifications" className="ml-[11px]">
        <svg viewBox="0 0 17 20" className="h-5 w-[17px]" fill="#0a45a0">
          <path d="M8.500 0a6 6 0 0 1 6 6v4.500l2.300 4.300c.2.400 0 .9-.6.9H.8c-.6 0-.8-.5-.6-.9l2.300-4.300V6a6 6 0 0 1 6-6zM5.800 17h5.400a2.700 2.700 0 0 1-5.400 0z" />
        </svg>
      </button>
    </div>
  );
}

function Taskbar() {
  return (
    <footer className="flex h-[60px] shrink-0 border-t border-[#b3abb6] bg-[linear-gradient(90deg,#ecd6dc_0%,#e2d8ec_12%,#e0d9ea_20%,#e6d6ea_34%,#dfd9e8_50%,#e2d8ea_58%,#d9dfd6_61%,#dadfd6_65%,#e3d8ea_68%,#e1d8ee_80%,#ecd5e4_88%,#e9d5dc_100%)]">
      <button aria-label="Weather" className="relative flex w-[346px] items-center pl-[25px]">
        <svg viewBox="0 0 32 24" className="h-6 w-8">
          <defs>
            <linearGradient id="cloud" x1="0" y1="0" x2="0" y2="1">
              <stop stopColor="#cfe3fb" />
              <stop offset="1" stopColor="#5f9df0" />
            </linearGradient>
          </defs>
          <path d="M7 23a6.500 6.500 0 0 1-.8-12.900A9.500 9.500 0 0 1 24.500 9.500 7 7 0 0 1 25 23z" fill="url(#cloud)" />
        </svg>
        <span className="absolute top-2 left-10 flex size-5 items-center justify-center rounded-full bg-[#c42b1c] font-['Open_Sans',sans-serif] text-[12px] text-white">6</span>
      </button>
      {taskbarApps.map((a) => (
        <button
          key={a.name}
          aria-label={a.name}
          className={
            a.active
              ? "mx-[3px] mt-1 flex h-[50px] w-[49px] flex-col items-center rounded-md border border-[#e3dce8] bg-[#f4eef8]"
              : "mt-1 flex h-[50px] w-[55px] flex-col items-center"
          }
        >
          <div className="flex h-[49px] shrink-0 items-center justify-center">{a.icon}</div>
          <div className={a.active ? "-mt-1.5 h-1 w-5 shrink-0 rounded-full bg-[#0a78d4]" : a.run ? "-mt-1 h-1 w-2 shrink-0 rounded-full bg-[#857f88]" : ""} />
        </button>
      ))}
      <Tray />
    </footer>
  );
}

export default function App() {
  return (
    <div className="flex h-screen flex-col overflow-hidden bg-[#f9fbfd] font-['Open_Sans',sans-serif]">
      <TabStrip />
      <AddressRow />
      <EditorHeader />
      <Toolbar />
      <div className="relative flex min-h-0 flex-1">
        <Filmstrip />
        <Canvas />
        <button aria-label="Show side panel" className="absolute -right-5 bottom-[9px] flex size-[50px] items-center rounded-full bg-white pl-1.5 text-[#444746] shadow-[0_1px_3px_rgba(60,64,67,0.5)]">
          <MdChevronLeft className="size-6" />
        </button>
      </div>
      <Taskbar />
    </div>
  );
}
